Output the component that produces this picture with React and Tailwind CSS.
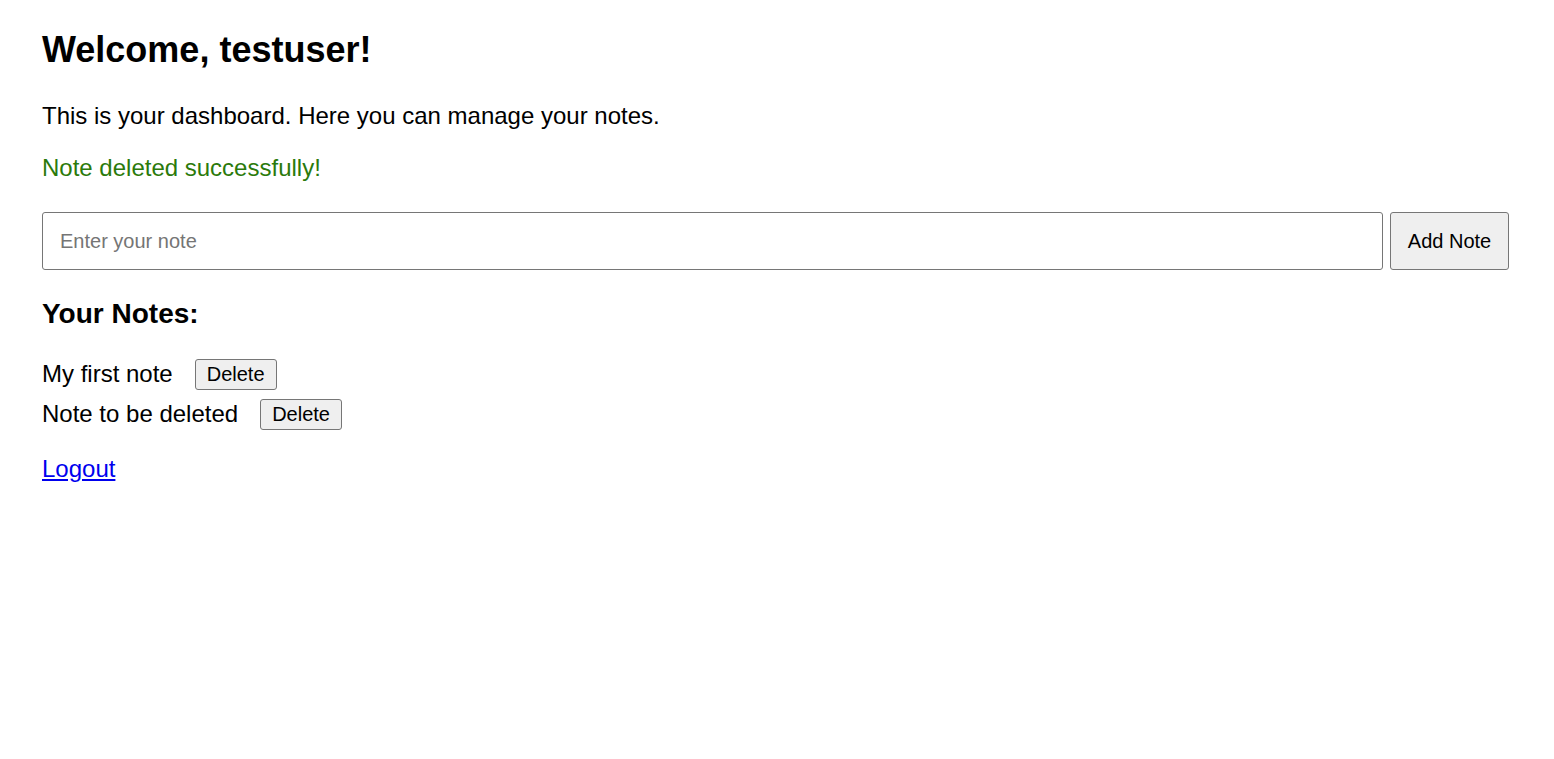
const notes = ["My first note", "Note to be deleted"];

export default function App() {
  return (
    <div className="min-h-screen bg-white pl-[42px] pr-[45px] pt-[28px] text-black font-['Liberation_Sans',Arial,sans-serif]">
      <h1 className="text-[36px] font-bold leading-[44px]">Welcome, testuser!</h1>
      <p className="mt-[30px] text-[24px] leading-[28px]">
        This is your dashboard. Here you can manage your notes.
      </p>
      <p className="mt-[24px] text-[24px] leading-[28px] text-[#2b7a0b]">Note deleted successfully!</p>

      <form className="mt-[30px] flex gap-[7px]" onSubmit={(e) => e.preventDefault()}>
        <input
          type="text"
          placeholder="Enter your note"
          className="h-[58px] flex-1 rounded-[3px] border border-[#767676] px-[17px] text-[20px] placeholder:text-[#757575] outline-none"
        />
        <button className="h-[58px] w-[119px] rounded-[3px] border border-[#767676] bg-[#efefef] text-[20px]">
          Add Note
        </button>
      </form>

      <h3 className="mt-[28px] text-[28px] font-bold leading-[32px]">Your Notes:</h3>
      <ul className="mt-[24px]">
        {notes.map((note) => (
          <li key={note} className="flex h-[40px] items-center text-[24px]">
            <span>{note}</span>
            <button className="ml-[22px] h-[31px] rounded-[3px] border border-[#767676] bg-[#efefef] px-[11px] text-[20px] leading-none">
              Delete
            </button>
          </li>
        ))}
      </ul>
      <a href="#" className="mt-[21px] inline-block text-[24px] leading-[28px] text-[#0000ee] underline">
        Logout
      </a>
    </div>
  );
}
